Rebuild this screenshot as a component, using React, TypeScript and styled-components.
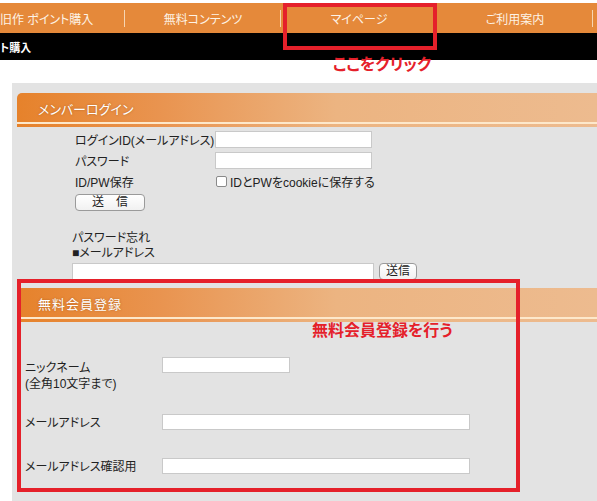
import React from "react";
import styled, { createGlobalStyle } from "styled-components";

const GlobalStyle = createGlobalStyle`
  body {
    margin: 0;
    background: #fff;
    font-family: "Liberation Sans", "Noto Sans CJK JP", sans-serif;
    font-feature-settings: "palt";
    font-size: 12px;
    color: #222;
    overflow: hidden;
  }
`;

const tabs = ["旧作 ポイント購入", "無料コンテンツ", "マイページ", "ご利用案内"];

const App = () => {
  return (
    <Page>
      <GlobalStyle />
      {/* グローバルナビ */}
      <Nav>
        {tabs.map((t, i) => (
          <Tab key={t} $first={i === 0}>
            {t}
          </Tab>
        ))}
      </Nav>
      <SubBar>
        <SubTitle>ト購入</SubTitle>
      </SubBar>

      <Panel>
        {/* メンバーログイン */}
        <SectionHead>メンバーログイン</SectionHead>
        <LoginForm>
          <FieldLabel>ログインID(メールアドレス)</FieldLabel>
          <TextInput type="text" $width={157} />
          <FieldLabel>パスワード</FieldLabel>
          <TextInput type="password" $width={157} />
          <FieldLabel>ID/PW保存</FieldLabel>
          <CheckRow>
            <Check type="checkbox" id="save" />
            <label htmlFor="save">IDとPWをcookieに保存する</label>
          </CheckRow>
          <SendButton $wide>送　信</SendButton>
        </LoginForm>

        <Forgot>
          <div>パスワード忘れ</div>
          <div>■メールアドレス</div>
          <ForgotRow>
            <TextInput type="text" $width={302} />
            <SendButton>送信</SendButton>
          </ForgotRow>
        </Forgot>

        {/* 無料会員登録 */}
        <SectionHead $spaced>無料会員登録</SectionHead>
        <RegisterForm>
          <RegLabel $offset={3}>
            ニックネーム
            <br />
            (全角10文字まで)
          </RegLabel>
          <TextInput type="text" $width={128} />
          <RegLabel $offset={1}>メールアドレス</RegLabel>
          <TextInput type="text" $width={308} />
          <RegLabel $offset={1}>メールアドレス確認用</RegLabel>
          <TextInput type="text" $width={308} />
        </RegisterForm>
      </Panel>

      {/* 注釈 */}
      <Marker style={{ left: 283, top: 3, width: 154, height: 47 }} />
      <Note style={{ left: 333, top: 51 }}>ここをクリック</Note>
      <Marker style={{ left: 17, top: 279, width: 503, height: 213 }} />
      <Note style={{ left: 312, top: 317 }}>無料会員登録を行う</Note>
    </Page>
  );
};

export default App;

const Page = styled.div`
  position: relative;
  width: 597px;
  height: 501px;
  overflow: hidden;
`;

const Nav = styled.div`
  margin-top: 3px;
  height: 30px;
  display: flex;
  background: #e5893a;
`;

const Tab = styled.div<{ $first?: boolean }>`
  position: relative;
  flex: 0 0 ${(p) => (p.$first ? "125px" : "156px")};
  display: flex;
  align-items: center;
  justify-content: ${(p) => (p.$first ? "flex-start" : "center")};
  color: #fdf3e6;
  font-size: 12px;
  white-space: nowrap;

  &::after {
    content: "";
    position: absolute;
    right: 0;
    top: 7px;
    bottom: 6px;
    width: 1px;
    background: #f6d5b2;
  }
`;

const SubBar = styled.div`
  height: 27px;
  background: #000;
  display: flex;
  align-items: center;
`;

const SubTitle = styled.div`
  color: #fff;
  font-weight: bold;
  font-size: 11px;
  white-space: nowrap;
`;

const Panel = styled.div`
  margin-top: 23px;
  margin-left: 12px;
  height: 418px;
  padding: 10px 0 0 5px;
  box-sizing: border-box;
  background: #e3e3e3;
`;

const SectionHead = styled.div<{ $spaced?: boolean }>`
  position: relative;
  height: 34px;
  margin-top: ${(p) => (p.$spaced ? "8px" : "0")};
  padding: 0 0 4px 21px;
  box-sizing: border-box;
  display: flex;
  align-items: center;
  border-radius: 5px 0 0 0;
  background: linear-gradient(to right, #e6822b 0%, #e99450 25%, #ecb481 55%, #edbb8f 100%);
  color: #fff;
  font-size: 13px;
  letter-spacing: ${(p) => (p.$spaced ? "1px" : "0")};
  text-shadow: 0 0 2px rgba(120, 60, 10, 0.5);

  &::after {
    content: "";
    position: absolute;
    left: 0;
    right: 0;
    bottom: 3px;
    height: 2px;
    background: #fde8cb;
  }
`;

const LoginForm = styled.div`
  display: grid;
  grid-template-columns: 140px auto;
  grid-auto-rows: 17px;
  row-gap: 4px;
  align-items: center;
  margin: 4px 0 0 58px;
  justify-content: start;
`;

const FieldLabel = styled.div`
  white-space: nowrap;
  color: #222;
`;

const TextInput = styled.input<{ $width: number }>`
  width: ${(p) => p.$width}px;
  height: 17px;
  box-sizing: border-box;
  border: 1px solid #c9c9c9;
  background: #fff;
  margin: 0;
  padding: 0 3px;
  font: inherit;
`;

const CheckRow = styled.div`
  display: flex;
  align-items: center;
  gap: 3px;
  white-space: nowrap;
`;

const Check = styled.input`
  width: 11px;
  height: 11px;
  margin: 0 0 0 1px;
  appearance: none;
  border: 1px solid #8a8a8a;
  border-radius: 2px;
  background: #fff;
`;

const SendButton = styled.button<{ $wide?: boolean }>`
  width: ${(p) => (p.$wide ? "70px" : "38px")};
  height: 17px;
  margin: 0;
  padding: 0;
  border: 1px solid #9a9a9a;
  border-radius: 4px;
  background: linear-gradient(#ffffff, #f1f1f1);
  font: inherit;
  font-size: 12px;
  color: #222;
  line-height: 15px;
`;

const Forgot = styled.div`
  margin: 20px 0 0 55px;
  line-height: 15px;
`;

const ForgotRow = styled.div`
  display: flex;
  align-items: center;
  gap: 5px;
  margin-top: 2px;
`;

const RegisterForm = styled.div`
  display: grid;
  grid-template-columns: 137px auto;
  grid-template-rows: 57px 44px 16px;
  justify-content: start;
  align-items: start;
  margin: 35px 0 0 8px;

  & > input {
    height: 16px;
  }
`;

const RegLabel = styled.div<{ $offset: number }>`
  line-height: 16px;
  margin-top: ${(p) => p.$offset}px;
  white-space: nowrap;
`;

const Marker = styled.div`
  position: absolute;
  box-sizing: border-box;
  border: 4px solid #e5202a;
  pointer-events: none;
`;

const Note = styled.div`
  position: absolute;
  color: #e5202a;
  font-weight: bold;
  font-size: 16px;
  white-space: nowrap;
`;
